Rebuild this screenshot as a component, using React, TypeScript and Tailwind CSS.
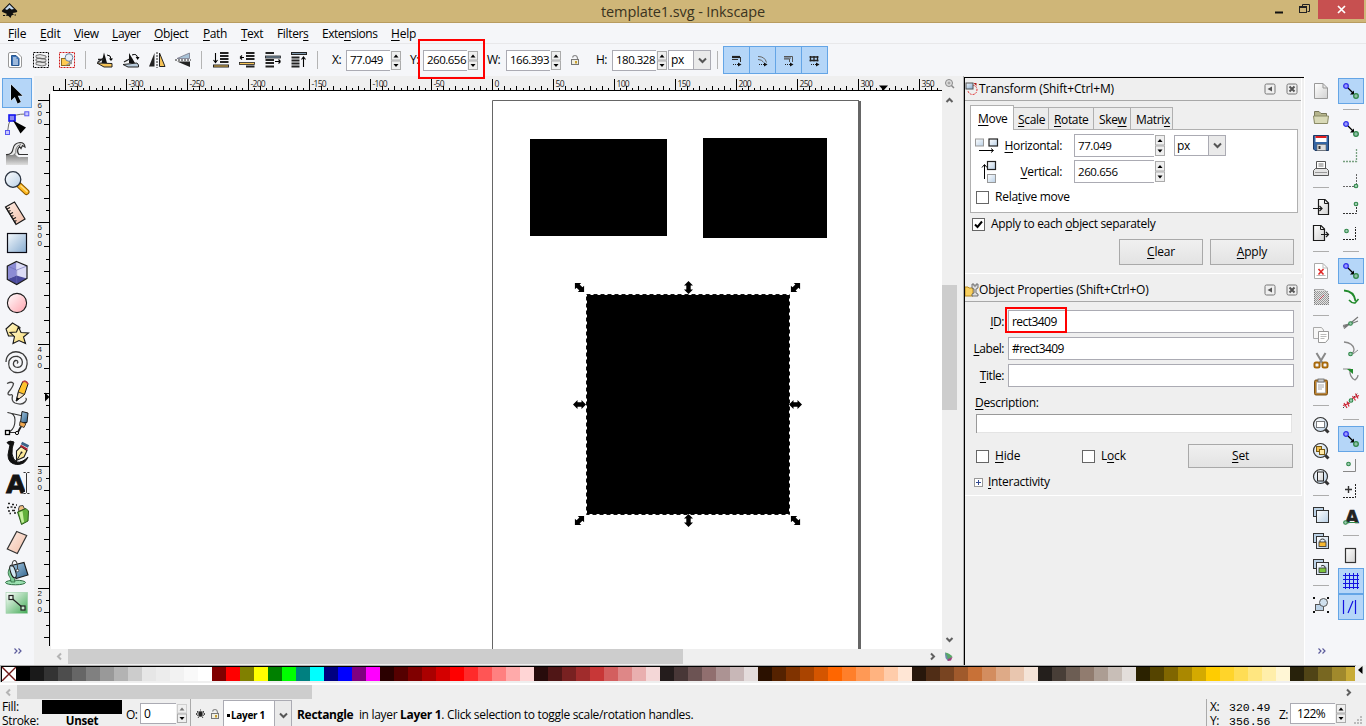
import React from "react";

type Kids = { children?: React.ReactNode };

/* ---------- drawing helpers ---------- */

function Pic({ w, h, children, className = "" }: Kids & { w: number; h: number; className?: string }) {
  return (
    <svg width={w} height={h} viewBox={`0 0 ${w} ${h}`} fill="none" className={`block shrink-0 ${className}`}>
      {children}
    </svg>
  );
}

function Gradients() {
  return (
    <svg width="0" height="0" className="absolute">
      <defs>
        <linearGradient id="blue" x1="0" y1="0" x2="1" y2="1">
          <stop offset="0" stopColor="#f4f9fd" />
          <stop offset="1" stopColor="#86abd0" />
        </linearGradient>
        <linearGradient id="steel" x1="0" y1="0" x2="1" y2="1">
          <stop offset="0" stopColor="#a8cbe4" />
          <stop offset="1" stopColor="#2f628c" />
        </linearGradient>
        <linearGradient id="pale" x1="0" y1="0" x2="1" y2="1">
          <stop offset="0" stopColor="#ffffff" />
          <stop offset="1" stopColor="#b9d0e6" />
        </linearGradient>
        <linearGradient id="pink" x1="0" y1="0" x2="1" y2="1">
          <stop offset="0" stopColor="#ffffff" />
          <stop offset="1" stopColor="#ffa3ad" />
        </linearGradient>
        <linearGradient id="peach" x1="0" y1="0" x2="1" y2="1">
          <stop offset="0" stopColor="#fdeee6" />
          <stop offset="1" stopColor="#f2bda6" />
        </linearGradient>
        <linearGradient id="gold" x1="0" y1="0" x2="1" y2="1">
          <stop offset="0" stopColor="#fffbd8" />
          <stop offset="1" stopColor="#f8d868" />
        </linearGradient>
        <linearGradient id="green" x1="0" y1="0" x2="1" y2="1">
          <stop offset="0" stopColor="#ffffff" />
          <stop offset="1" stopColor="#43ab57" />
        </linearGradient>
        <linearGradient id="grayv" x1="0" y1="0" x2="0" y2="1">
          <stop offset="0" stopColor="#6d6d6d" />
          <stop offset="1" stopColor="#dedede" />
        </linearGradient>
        <linearGradient id="paper" x1="0" y1="0" x2="1" y2="1">
          <stop offset="0" stopColor="#ffffff" />
          <stop offset="1" stopColor="#d2d2d2" />
        </linearGradient>
      </defs>
    </svg>
  );
}

/* ---------- toolbox ---------- */

const K = "#1a1a1a";

const tools: React.ReactNode[] = [
  <path d="M9 6.5V22.5L12.8 19L15.6 25.5L18.8 24L15.8 17.7H20.5Z" fill="#000" stroke="#e8f2fb" strokeWidth="1" paintOrder="stroke" />,
  <>
    <path d="M24 6Q12 6 9.5 10Q6 15 5.5 24" stroke="#707070" />
    <rect x="22.8" y="3.8" width="4" height="4" fill="#c8c8ff" stroke="#5858f0" />
    <rect x="3.5" y="22.5" width="4" height="4" fill="#c8c8ff" stroke="#5858f0" />
    <rect x="7" y="7" width="6" height="6" fill="#8a8af0" stroke="#1414f0" strokeWidth="1.6" />
    <path d="M11 12.5L24 19.5L18.5 25.5Z" fill="#000" />
  </>,
  <>
    <path d="M4 17H10Q12 17 13 14Q14 20 19 19H26V27H4Z" fill="url(#grayv)" />
    <path d="M4 16.5Q10 17 11 11Q12 5 18 4.500Q22.500 4.500 23 9L20.500 7.500L19 10.500L17.500 8.500Q14 13 17 16.500H26" fill="#e8e8e8" stroke="#333" strokeWidth="1.2" />
    <path d="M12 17Q14.500 15 14 11Q15 7 19 6.500" stroke="#777" />
  </>,
  <>
    <path d="M17 17L24.5 24" stroke="#8c5a00" strokeWidth="6" strokeLinecap="round" />
    <path d="M18 18L24.5 24" stroke="#ffb81e" strokeWidth="4" strokeLinecap="round" />
    <path d="M19 18L25 23.500" stroke="#ffe08a" strokeWidth="1.500" strokeLinecap="round" />
    <circle cx="11" cy="11.5" r="7.8" fill="url(#pale)" stroke="#2a3340" strokeWidth="1.3" />
  </>,
  <>
    <path d="M3.5 9L12.5 4L23 21L14 26.5Z" fill="url(#peach)" stroke={K} strokeWidth="1.2" />
    <path d="M4 9.5L14 26M5 11l3-1.5M6.5 13.5l2-1M8 16l3-1.5M9.5 18.5l2-1M11 21l3-1.5M12.5 23.5l2-1" stroke={K} strokeWidth="1.1" />
  </>,
  <rect x="5.5" y="5.5" width="19" height="19" fill="url(#blue)" stroke="#0b0b14" strokeWidth="1.2" />,
  <>
    <path d="M5.3 8L14.5 3.8V17.5L5.3 21.3Z" fill="#8c8cd4" />
    <path d="M14.5 3.8L25 8V20.5L14.5 17.5Z" fill="#dcdcf6" />
    <path d="M14.5 17.5L25 20.5L14.7 26.3L5.3 21.3Z" fill="#4a4a9c" />
    <path d="M5.300 8L14.700 12V26.500M14.700 12L25 8" stroke="#6a6ab4" strokeWidth=".6" />
    <path d="M14.5 3.5L25 8V20.5L14.7 26.5L5.3 21.5V8Z" stroke={K} strokeWidth="1.2" />
  </>,
  <circle cx="15" cy="15" r="9.6" fill="url(#pink)" stroke={K} strokeWidth="1.1" />,
  <>
    <path d="M10.5 5L18 9.5L15.5 18H6.5L4 11Z" fill="url(#gold)" stroke={K} strokeWidth="1.1" />
    <path d="M16.5 9L19 14.5L26.5 15L21.5 19L23.5 25.5L17 22.5L11 25.5L12.5 18.7L8 14.5L14.5 14Z" fill="url(#gold)" stroke={K} strokeWidth="1.1" />
  </>,
  <path d="M15 15.500Q16.500 14.500 15.500 13Q13.500 11.500 11.800 14Q10.500 17.500 13.500 19Q18 20.500 20 16.500Q21.500 10.500 16 8.500Q9.500 7.500 7 13Q5.500 20.500 11.500 23.800Q19 26.500 24 20.500Q27.500 12 21 6Q13.500 1.500 7.500 6Q4 9 4 14" stroke="#3a3a3a" strokeWidth="1.300" />,
  <>
    <path d="M5 5.5Q10 3 11.5 5.5Q11 9 7 13.5Q4.5 17 8 17Q10.5 16 10.5 18Q9 23 13 25Q20 27.5 23 24Q25.5 21 23.5 20" stroke="#444" strokeWidth="1.3" />
    <path d="M14.2 23L16.5 13L20.5 4Q24 1.8 26 6L22.5 16.5Z" fill="#ffc42e" stroke={K} strokeWidth="1" />
    <path d="M14.2 23L16.5 14L22.5 16.5Z" fill="#f6e2c0" stroke={K} strokeWidth=".8" />
    <path d="M14.2 23L15 19.5L17.3 20.5Z" fill="#000" />
    <path d="M20.5 4Q24 1.8 26 6" stroke="#c04040" strokeWidth="1.6" />
  </>,
  <>
    <path d="M5.500 4.500Q13 5 13 12Q13 20 8 23.500M7.500 24.500H14M5.500 4.500L21 8" stroke="#333" strokeWidth="1.100" />
    <rect x="3.500" y="22.500" width="4" height="4" fill="#fff" stroke="#000" strokeWidth="1.300" />
    <circle cx="15" cy="25" r="1.600" fill="#fff" stroke="#000" />
    <path d="M20 3.500L26 5L25 14.500H18.500Z" fill="url(#steel)" stroke={K} />
    <path d="M18 13.500L24 15.500L22 19.500L17.500 17.500Z" fill="#f0a850" stroke={K} strokeWidth=".8" />
    <path d="M19 18.500L16 24" stroke={K} strokeWidth="1.800" />
  </>,
  <>
    <path d="M5 4.500Q8 2 12 4Q9.500 10 10 16Q11 22 15 24Q20 25 26 19Q23 27 14.500 26.500Q6 25.500 6 17Q7 11 8 7Q6.500 6.500 5 4.500Z" fill="#101010" stroke="#101010" />
    <path d="M14.500 22.500L14.500 13L19 8.500L25 12.500L22 19Z" fill="url(#gold)" stroke={K} strokeWidth="1.100" />
    <path d="M15 22L19 15" stroke={K} /><circle cx="19.500" cy="14.500" r="1" fill={K} />
    <path d="M18.500 7.500L25.500 11.500" stroke="#b02030" strokeWidth="2" />
    <path d="M19.500 5L26.500 8.500" stroke="#3c6488" strokeWidth="3" />
  </>,
  <>
    <text x="4" y="24.500" fontFamily="DejaVu Sans" fontWeight="700" fontSize="25.500" fill="#141414" stroke="#141414" strokeWidth=".9">A</text>
    <path d="M21.500 4.500h2l1 1l1-1h2M24.500 5.500V24.500M21.500 25.500h2l1-1l1 1h2" stroke="#f5f6f9" strokeWidth="3" />
    <path d="M21.500 4.500h2l1 1l1-1h2M24.500 5.500V24.500M21.500 25.500h2l1-1l1 1h2" stroke="#333" strokeWidth="1" />
  </>,
  <>
    <path d="M6 5.500h2M10 6.500h2M5 9.500h2M8.500 9h2M12 9.500h2M6 13h2M10 12.500h3M7.500 15.500h1.500M12 15h2M14 7h1" stroke="#222" strokeWidth="1.500" />
    <path d="M16.500 11L17.500 8L21 7.500L22.500 11L17 13.500Z" fill="#f0c080" stroke="#444" />
    <path d="M15.500 14L24 10.500L26.500 13L26 23L19.500 26.500L17.500 20Z" fill="#62b13c" stroke="#2a5a18" />
    <path d="M17 14.500L20.500 13L22 24L19.800 25Z" fill="#c8f0a0" />
  </>,
  <path d="M14.700 3.500L24.700 7.500L15.300 25.500L5.300 21Z" fill="url(#peach)" stroke="#333" strokeWidth="1.200" />,
  <>
    <ellipse cx="13.500" cy="24.500" rx="10" ry="2.300" fill="#9ae0b0" stroke="#2c6a40" />
    <path d="M10 7Q5 12 6.500 17Q9 20 9 24H13Q13 20 10 17Z" fill="#7ccc94" stroke="#2c6a40" strokeWidth=".8" />
    <path d="M9.500 7.500L22 4.500L26 17L14 20.500Z" fill="url(#steel)" stroke={K} strokeWidth="1.100" />
    <ellipse cx="11" cy="13.500" rx="2.500" ry="6.500" transform="rotate(-18 11 13.500)" fill="#cfe6f2" stroke={K} />
    <path d="M10 9Q10 2 13 2.500Q16 4 15.500 12" stroke="#444" strokeWidth="1.100" />
    <circle cx="15.500" cy="12.500" r="1.300" fill="#fff" stroke="#333" strokeWidth=".8" />
  </>,
  <>
    <rect x="4" y="4.300" width="21.600" height="21" fill="url(#green)" stroke="#9ed0aa" strokeWidth=".6" />
    <path d="M9 9.500L21 20" stroke="#222" strokeWidth="1.200" />
    <rect x="7" y="7.500" width="4" height="4" fill="#e8f5ea" stroke="#222" strokeWidth="1.200" />
    <rect x="19" y="18" width="4" height="4" fill="#c8e8d0" stroke="#222" strokeWidth="1.200" />
  </>,
];

function Toolbox() {
  return (
    <div className="flex w-[34px] shrink-0 flex-col items-center bg-[#f5f6f9] pt-[2px]">
      {tools.map((t, i) => (
        <div
          key={i}
          className={
            i === 0
              ? "flex h-[30px] w-[30px] items-center justify-center bg-[#b5d6f8] shadow-[inset_0_0_0_1px_#64a5e6]"
              : "flex h-[30px] w-[30px] items-center justify-center"
          }
        >
          <Pic w={30} h={30}>{t}</Pic>
        </div>
      ))}
      <Chevrons />
    </div>
  );
}

function Chevrons() {
  return (
    <Pic w={10} h={8} className="mt-auto mb-[10px] ml-[1px]">
      <path d="M1.500 1.500L4 4L1.500 6.500M5.500 1.500L8 4L5.500 6.500" stroke="#5c5c9c" strokeWidth="1.200" />
    </Pic>
  );
}

/* ---------- form pieces ---------- */

function Spinner({ h = 19, dim = false }: { h?: number; dim?: boolean }) {
  const half = (h - 1) / 2;
  return (
    <Pic w={10} h={h}>
      <rect x=".5" y=".5" width="9" height={half - 0.5} fill="#efefef" stroke={dim ? "#cfcfcf" : "#ababab"} />
      <rect x=".5" y={half + 1} width="9" height={half - 0.5} fill="#efefef" stroke="#ababab" />
      <path d={`M2.500 ${half / 2 + 2}L5 ${half / 2 - 1}L7.500 ${half / 2 + 2}Z`} fill={dim ? "#777" : "#000"} />
      <path d={`M2.500 ${half * 1.5 - 0.5}L5 ${half * 1.5 + 2.5}L7.500 ${half * 1.5 - 0.5}Z`} fill="#000" />
    </Pic>
  );
}

function Caret() {
  return (
    <Pic w={9} h={7}>
      <path d="M1 1.500L4.500 5L8 1.500" stroke="#555" strokeWidth="2" />
    </Pic>
  );
}

function BarField({ value }: { value: string }) {
  return (
    <div className="flex shrink-0 items-center">
      <div className="mr-px flex h-[21px] w-[44px] items-center border border-r-0 border-[#ababb3] bg-white pl-[3px] text-[11.5px] tracking-[-0.5px] whitespace-nowrap">
        <span>{value}</span>
      </div>
      <Spinner />
    </div>
  );
}

function Sep({ className }: { className: string }) {
  return <div className={`h-[18px] w-px shrink-0 bg-[#b4b4b4] ${className}`} />;
}

function Lock() {
  return (
    <Pic w={10} h={12}>
      <path d="M2.500 3.500Q3 1.500 5 1.500Q7 1.500 7.500 4V6" stroke="#888" strokeWidth="1.200" />
      <rect x="1.500" y="5.500" width="7" height="5" fill="#f0eee0" stroke="#777" />
      <path d="M6 7v2.500" stroke="#c8a030" strokeWidth="2" />
    </Pic>
  );
}

/* ---------- option bar ---------- */

const barIcons: React.ReactNode[] = [
  <>
    <path d="M3.500 4Q3.500 2.500 5 2.500H12L16.500 7V16Q16.500 17.500 15 17.500H5Q3.500 17.500 3.500 16Z" fill="#fff" stroke="#999" />
    <path d="M6.500 5.500H11L14 8.500V15.500H6.500Z" fill="#3a72b8" stroke="#28568f" />
    <path d="M8 8h3.500M8 10h5M8 12h5M8 14h5" stroke="#fff" strokeWidth="1" />
  </>,
  <>
    <rect x="2.500" y="2.500" width="15" height="15" stroke="#000" strokeDasharray="2 1" />
    <path d="M5 12.500l4-1 6 1.500v2l-4 1-6-1.500ZM5 9l4-1 6 1.500v2l-4 1-6-1.500ZM5 5.500l4-1 6 1.500v2l-4 1-6-1.500Z" fill="#e4e4e4" stroke="#555" strokeWidth=".8" />
  </>,
  <>
    <rect x="2.500" y="2.500" width="15" height="15" stroke="#d01818" strokeDasharray="2 1" />
    <rect x="4.500" y="8.500" width="8" height="7" fill="#ffcb50" stroke="#8a6a20" />
    <circle cx="12" cy="7.500" r="3.800" fill="#e8eff6" stroke="#6b83a0" />
    <path d="M8 15.500l7-5v3.500Z" fill="#999" />
  </>,
  <>
    <path d="M9 2.500L12 13H6.500Z" fill="#111" />
    <path d="M2.500 12.500L8 8.500" stroke="#222" strokeWidth="1.200" />
    <path d="M2 13L17 13.500V17H9Z" fill="#f5c255" stroke="#222" />
    <path d="M12 5Q16 5 16 9" stroke="#000" /><path d="M14 8.500h4L16 11Z" fill="#000" />
    <path d="M3 9.500h6" stroke="#222" strokeWidth="1.500" />
  </>,
  <>
    <path d="M8 3L14 13H8Z" fill="#111" />
    <path d="M3 12L8.500 9" stroke="#222" strokeWidth="1.200" />
    <path d="M2 14.500L16 13L17.500 15V17H7Z" fill="#b9ccdc" stroke="#222" />
    <path d="M11 5Q16 3 16.500 8" stroke="#000" /><path d="M14.700 7h3.800L16.700 10Z" fill="#000" />
  </>,
  <>
    <path d="M7.500 3V16.500H2Z" fill="#222" />
    <path d="M12.500 3V16.500H18Z" fill="#f5c255" stroke="#222" />
    <path d="M10 2V18" stroke="#222" strokeDasharray="2 1" />
  </>,
  <>
    <path d="M4 8.500H16.500V3Z" fill="#a9c3d8" stroke="#778" strokeWidth=".8" />
    <path d="M4 11.500H17V17Z" fill="#222" />
    <path d="M2 10H18" stroke="#222" strokeDasharray="2 1" />
  </>,
  <>
    <path d="M4.500 3V12M2.500 10L4.500 12.500L6.500 10" stroke="#000" strokeWidth="1.100" />
    <path d="M9 3h8.500M9 6h8.500M9 9h8.500M9 12h8.500" stroke="#222" strokeWidth="1.800" />
    <rect x="2.500" y="15" width="15" height="2" fill="#f5c255" stroke="#222" />
  </>,
  <>
    <path d="M3 7.500H7M3 7.500l2-2M3 7.500l2 2" stroke="#000" strokeWidth="1.100" />
    <path d="M9 3h8.500M9 6h8.500M9 9h8.500M9 16.500h8.500" stroke="#222" strokeWidth="1.800" />
    <rect x="2.500" y="12.500" width="15" height="2" fill="#f5c255" stroke="#222" strokeWidth=".8" />
  </>,
  <>
    <path d="M2.500 3h8.500M2.500 10h8.500M2.500 13h8.500M2.500 16.500h8.500" stroke="#222" strokeWidth="1.800" />
    <rect x="2.500" y="6" width="15" height="2" fill="#7d97ac" stroke="#222" strokeWidth=".8" />
    <path d="M12 11.500h5.500M17.500 11.500l-2-2M17.500 11.500l-2 2" stroke="#000" strokeWidth="1.100" />
  </>,
  <>
    <rect x="2.500" y="2.500" width="15" height="2" fill="#7d97ac" stroke="#222" />
    <path d="M2.500 7.500h8M2.500 10.500h8M2.500 13.500h8M2.500 16.500h8" stroke="#222" strokeWidth="1.800" />
    <path d="M14.500 17V7.500M12.500 9.500L14.500 7L16.500 9.500" stroke="#000" strokeWidth="1.100" />
  </>,
];

const toggleIcons: React.ReactNode[] = [
  <><path d="M3 4H11" stroke="#222" strokeWidth="2.200" /><path d="M11.500 4V9M3 6.500h6" stroke="#333" /></>,
  <path d="M3 3.500Q10 3.500 11.500 9.500M3 6.500Q7.500 6.500 8.500 9.500" stroke="#666" />,
  <path d="M3 3.500H11.500V9M3 6H8.500V9M3 5h7" stroke="#555" />,
  <path d="M2.500 4H11.500M2.500 7.500H11.500M3.500 3v5.500M7 3v5.500M10.500 3v5.500" stroke="#222" strokeWidth="1.300" />,
];

function BarIcon({ i }: { i: number }) {
  return (
    <div className="flex w-[26px] shrink-0 justify-center">
      <Pic w={20} h={20}>{barIcons[i]}</Pic>
    </div>
  );
}

function OptionBar() {
  return (
    <div className="flex h-[33px] items-center border-t border-[#e8e8ea] bg-[#f5f6f9] pl-[2px]">
      {[0, 1, 2].map((i) => <BarIcon key={i} i={i} />)}
      <Sep className="mr-[6px] ml-[5px]" />
      {[3, 4, 5, 6].map((i) => <BarIcon key={i} i={i} />)}
      <Sep className="mr-[6px] ml-[5px]" />
      {[7, 8, 9, 10].map((i) => <BarIcon key={i} i={i} />)}
      <Sep className="ml-[5px]" />
      <span className="ml-[14px] w-[14px] shrink-0 tracking-[-0.5px]">X:</span>
      <BarField value="77.049" />
      <span className="ml-[9px] w-[13px] shrink-0 tracking-[-0.5px]">Y:</span>
      <BarField value="260.656" />
      <span className="ml-[9px] w-[19px] shrink-0 tracking-[-0.5px]">W:</span>
      <BarField value="166.393" />
      <div className="ml-[9px]"><Lock /></div>
      <span className="ml-[16px] w-[16px] shrink-0 tracking-[-0.5px]">H:</span>
      <BarField value="180.328" />
      <div className="ml-px flex h-[20px] w-[43px] shrink-0 border border-[#ababb3] bg-white">
        <span className="flex flex-1 items-center pl-[2px] tracking-[-0.4px]">px</span>
        <span className="flex w-[17px] items-center justify-center border-l border-[#ababb3] bg-[#eaeaea]"><Caret /></span>
      </div>
      <Sep className="ml-[6px]" />
      <div className="ml-[5px] flex">
        {toggleIcons.map((t, i) => (
          <div key={i} className="-mr-px flex h-[28px] w-[27px] shrink-0 items-center justify-center border border-[#64a5e6] bg-[#b5d6f8]">
            <Pic w={15} h={15}>
              {t}
              <path d="M4 11.500H9" stroke="#222" strokeDasharray="1 1" />
              <path d="M9 9.500L12.500 11.500L9 13.500Z" fill="#111" />
            </Pic>
          </div>
        ))}
      </div>
    </div>
  );
}

/* ---------- title and menu ---------- */

function TitleBar() {
  return (
    <div className="flex h-[23px] items-start border-b border-[#b89c60] bg-[#cfb678]">
      <Pic w={17} h={17} className="mt-[2px] ml-[1px]">
        <path d="M8.500 1L16 8.500Q17 10 14.500 10.500L11.500 11L13 12.500L10.500 13.500L9.500 16L7.500 14L4.500 13.500L6 12L1.500 10Q0 9 1.500 8Z" fill="#111" />
        <path d="M8.500 2.500L13 7L10.500 7.500L8.500 6L6 8L4 7Z" fill="#c5d8ec" />
        <path d="M2 13.500h2M13.500 13h1.500" stroke="#111" />
      </Pic>
      <div className="mt-[2px] ml-[583px] w-[180px] text-[14.5px] leading-[20px] tracking-[-0.1px] whitespace-nowrap text-[#3a3320]">template1.svg - Inkscape</div>
      <Pic w={50} h={20} className="mr-px ml-auto">
        <path d="M8 12.500H16" stroke="#111" strokeWidth="2" />
        <path d="M35.500 6V4.500H42.500V11.500H40.500" stroke="#222" />
        <rect x="32.500" y="6.500" width="7" height="6" stroke="#222" strokeWidth="1" />
        <path d="M32 7H40" stroke="#222" strokeWidth="2" />
      </Pic>
      <div className="mr-[2px] flex h-[19px] w-[46px] items-center justify-center bg-[#c75050]">
        <Pic w={9} h={9}><path d="M1 1L8 8M8 1L1 8" stroke="#fff" strokeWidth="1.700" /></Pic>
      </div>
    </div>
  );
}

const U = ({ children }: Kids) => <span className="underline decoration-1 underline-offset-2">{children}</span>;

function MenuBar() {
  return (
    <div className="flex h-[20px] items-center bg-[#f5f6f9] pt-[2px] pl-[8px] text-[12px] leading-[18px] tracking-[-0.2px] whitespace-nowrap">
      <span className="w-[32px]"><U>F</U>ile</span>
      <span className="w-[34px]"><U>E</U>dit</span>
      <span className="w-[38px] tracking-[-0.4px]"><U>V</U>iew</span>
      <span className="w-[42px] tracking-[-0.4px]"><U>L</U>ayer</span>
      <span className="w-[49px] tracking-[-0.35px]"><U>O</U>bject</span>
      <span className="w-[38px] tracking-[-0.4px]"><U>P</U>ath</span>
      <span className="w-[36px] tracking-[-0.5px]"><U>T</U>ext</span>
      <span className="w-[45px] tracking-[-0.35px]">Filter<U>s</U></span>
      <span className="w-[69px] tracking-[-0.5px]">Exte<U>n</U>sions</span>
      <span><U>H</U>elp</span>
    </div>
  );
}

/* ---------- rulers and drawing ---------- */

function TopRuler() {
  const ticks: React.ReactNode[] = [];
  for (let n = -72; n <= 73; n++) {
    const x = Math.round(441 + n * 6.1) + 0.5;
    if (x < 2 || x > 890) continue;
    const major = n % 10 === 0;
    ticks.push(<path key={n} d={`M${x} 15V${major ? 3 : n % 2 === 0 ? 10 : 12}`} stroke="#000" />);
    if (major) ticks.push(<text key={`t${n}`} x={x + 2} y="10.800" fontSize="8.500" letterSpacing="-0.7" fill="#222">{n * 5}</text>);
  }
  return (
    <Pic w={891} h={15}>
      <path d="M2 14.500H891" stroke="#000" />
      {ticks}
      <path d="M828 9.500h9l-4.500 5Z" fill="#000" />
    </Pic>
  );
}

function SideRuler() {
  const ticks: React.ReactNode[] = [];
  for (let n = 0; n <= 44; n++) {
    const y = Math.round(9 + n * 12.2) + 0.5;
    if (y > 556) continue;
    const major = n % 10 === 0;
    ticks.push(<path key={n} d={`M16 ${y}H${major ? 4 : n % 2 === 0 ? 10 : 12}`} stroke="#000" />);
    if (major)
      String(600 - n * 10).split("").forEach((c, k) =>
        ticks.push(<text key={`${n}-${k}`} x="3.500" y={y + 7.5 + k * 8} fontSize="8" fontFamily="Liberation Sans" fill="#222">{c}</text>)
      );
  }
  return (
    <Pic w={17} h={558}>
      <path d="M15.500 3V555" stroke="#000" />
      {ticks}
      <path d="M11 301.500v9l4.500-4.500Z" fill="#000" />
    </Pic>
  );
}

function Handle({ x, y, r }: { x: number; y: number; r: number }) {
  return (
    <path
      transform={`translate(${x} ${y}) rotate(${r})`}
      d="M-6.500 0L-2 -4.500V-2.200H2V-4.500L6.500 0L2 4.500V2.200H-2V4.500Z"
      fill="#000"
    />
  );
}

function Drawing() {
  return (
    <Pic w={891} h={558} className="bg-white">
      <path d="M441.500 558V9.500H808" stroke="#666" />
      <path d="M808.500 10V558" stroke="#666" strokeWidth="3" />
      <rect x="479" y="48" width="137" height="97" fill="#000" />
      <rect x="652" y="47" width="124" height="100" fill="#000" />
      <rect x="536" y="204" width="202" height="219" fill="#000" />
      <rect x="535.500" y="203.500" width="203" height="220" stroke="#fff" />
      <rect x="535.500" y="203.500" width="203" height="220" stroke="#111" strokeDasharray="4 3" />
      <Handle x={528.5} y={196.5} r={45} />
      <Handle x={744.5} y={196.5} r={-45} />
      <Handle x={528.5} y={429.5} r={-45} />
      <Handle x={744.5} y={429.5} r={45} />
      <Handle x={637.5} y={196.5} r={90} />
      <Handle x={637.5} y={429.5} r={90} />
      <Handle x={528.5} y={313.5} r={0} />
      <Handle x={744.5} y={313.5} r={0} />
    </Pic>
  );
}

function Chevron({ dir, color = "#606060" }: { dir: "l" | "r" | "u" | "d"; color?: string }) {
  const d = {
    l: "M6 1.500L3 4.500L6 7.500",
    r: "M3 1.500L6 4.500L3 7.500",
    u: "M1.500 6L4.500 3L7.500 6",
    d: "M1.500 3L4.500 6L7.500 3",
  }[dir];
  return <Pic w={9} h={9}><path d={d} stroke={color} strokeWidth="2" /></Pic>;
}

function CanvasArea() {
  return (
    <div className="flex w-[929px] shrink-0 flex-col bg-[#efefef]">
      <div className="flex h-[15px]">
        <div className="w-[17px]" />
        <TopRuler />
        <Pic w={15} h={15}>
          <circle cx="7" cy="7" r="3.500" fill="#ddd" stroke="#888" /><path d="M9.500 9.500L12 12" stroke="#888" strokeWidth="1.500" /><path d="M5.500 7h3M7 5.500v3" stroke="#888" strokeWidth=".8" />
        </Pic>
      </div>
      <div className="flex h-[558px]">
        <SideRuler />
        <Drawing />
        <div className="flex w-[15px] flex-col items-center">
          <div className="mt-[5px]"><Chevron dir="u" /></div>
          <div className="mt-[180px] h-[125px] w-[15px] bg-[#cdcdcd]" />
          <div className="mt-auto mb-[5px]"><Chevron dir="d" /></div>
        </div>
      </div>
      <div className="flex h-[15px] items-center pl-[21px]">
        <Chevron dir="l" color="#b4b4b4" />
        <div className="ml-[4px] h-[15px] w-[615px] bg-[#cdcdcd]" />
        <div className="ml-auto"><Chevron dir="r" /></div>
        <Pic w={11} h={11} className="mr-[9px] ml-[6px]">
          <path d="M2 1.500Q7 2 9.500 6L5 9.500Q3 8 2 1.500Z" fill="#58a868" /><path d="M4 8.500L9.500 6L8 9.500L5 10Z" fill="#a04080" /><path d="M2 1.500L2.500 7L5 10L4 5Z" fill="#6c88b0" />
        </Pic>
      </div>
    </div>
  );
}

/* ---------- dock ---------- */

function PanelButtons() {
  return (
    <>
      <Pic w={12} h={12} className="ml-auto">
        <rect x="1" y="1" width="10" height="10" rx="1.500" stroke="#777" /><path d="M8 3.500V8.500L3.500 6Z" fill="#555" />
      </Pic>
      <Pic w={12} h={12} className="mr-[3px] ml-[10px]">
        <rect x="1" y="1" width="10" height="10" rx="1.500" stroke="#777" /><path d="M3.500 3.500L8.500 8.500M8.500 3.500L3.500 8.500" stroke="#555" strokeWidth="2" />
      </Pic>
    </>
  );
}

function Check({ on = false }: { on?: boolean }) {
  return (
    <Pic w={13} h={13}>
      <rect x=".5" y=".5" width="12" height="12" fill="#fff" stroke="#666" />
      {on && <path d="M3 6.500L5.500 9L10 3.500" stroke="#000" strokeWidth="2" />}
    </Pic>
  );
}

function Btn({ w, h = 26, children }: Kids & { w: string; h?: number }) {
  return (
    <div className={`flex ${h === 26 ? "h-[26px]" : "h-[24px]"} ${w} items-center justify-center border border-[#a9a9a9] bg-linear-to-b from-[#f0f0f0] to-[#e3e3e3] tracking-[-0.2px]`}>
      <span>{children}</span>
    </div>
  );
}

function DockField({ value }: { value: string }) {
  return (
    <div className="flex items-center">
      <div className="mr-px flex h-[23px] w-[80px] items-center border border-r-0 border-[#ababb3] bg-white pl-[3px] text-[11.5px] tracking-[-0.4px]">{value}</div>
      <Spinner h={21} />
    </div>
  );
}

function PropRow({ label, value, className }: { label: React.ReactNode; value: string; className: string }) {
  return (
    <div className={`flex h-[23px] items-center ${className}`}>
      <span className="w-[39px] text-right tracking-[-0.45px]">{label}</span>
      <div className="ml-[4px] flex h-[23px] w-[286px] items-center border border-[#ababb3] bg-white pl-[3px] tracking-[-0.55px]">{value}</div>
    </div>
  );
}

function Tab({ w, children }: Kids & { w: string }) {
  return (
    <div className={`-ml-px flex h-[22px] ${w} items-center overflow-hidden border border-b-0 border-[#b0b0b0] bg-[#ececec] pt-[2px] pl-[4px] tracking-[-0.35px]`}>
      <span>{children}</span>
    </div>
  );
}

function Dock() {
  return (
    <div className="flex w-[341px] shrink-0 flex-col border-l border-[#b0b0b0] bg-[#efefef] pt-px text-[12px] leading-[16px] whitespace-nowrap">
      <div className="flex flex-1 flex-col border-t border-l border-black">
        <div className="mr-[2px] h-[196px] border-r border-b border-white">
          <div className="flex h-[23px] items-center border-b border-[#a8a8a8]">
            <Pic w={14} h={14}>
              <path d="M7.500 3.500Q11 3 12 7Q12 12 8 12.500Q4 12.500 3 9" stroke="#e03030" strokeDasharray="2 1" />
              <rect x="1" y="1" width="7" height="6" fill="url(#blue)" stroke="#555" /><path d="M8.500 1h3v3Z" fill="#b01818" />
            </Pic>
            <span className="tracking-[-0.14px]">Transform (Shift+Ctrl+M)</span>
            <PanelButtons />
          </div>
          <div className="mt-[4px] ml-[5px] flex h-[24px] items-end">
            <div className="z-10 -mb-px flex h-[25px] w-[44px] items-center overflow-hidden border border-b-0 border-[#b0b0b0] bg-white pt-[2px] pl-[7px] tracking-[-0.3px]"><span><U>M</U>ove</span></div>
            <Tab w="w-[36px]"><U>S</U>cale</Tab>
            <Tab w="w-[46px]"><span className="pl-[1px]"><U>R</U>otate</span></Tab>
            <Tab w="w-[38px]"><span className="pl-[1px]">Ske<U>w</U></span></Tab>
            <Tab w="w-[43px]"><span className="pl-[1px]">Matri<U>x</U></span></Tab>
          </div>
          <div className="ml-[5px] h-[84px] w-[328px] border border-[#b0b0b0] bg-white">
            <div className="mt-[4px] flex h-[23px] items-center pl-[3px]">
              <Pic w={25} h={17}>
                <rect x="1.500" y="2" width="8" height="7" fill="url(#pale)" stroke="#999" /><rect x="15" y="2" width="8.500" height="7" fill="url(#pale)" stroke="#222" strokeWidth="1.200" /><path d="M5 13.500H19M17 11.500L19.500 13.500L17 15.500" stroke="#000" />
              </Pic>
              <span className="w-[63px] text-right tracking-[-0.35px]"><U>H</U>orizontal:</span>
              <div className="ml-[12px]"><DockField value="77.049" /></div>
              <div className="ml-[9px] flex h-[21px] w-[52px] border border-[#ababb3] bg-white">
                <span className="flex flex-1 items-center pl-[2px] tracking-[-0.4px]">px</span>
                <span className="flex w-[17px] items-center justify-center border-l border-[#ababb3] bg-[#eaeaea]"><Caret /></span>
              </div>
            </div>
            <div className="mt-[3px] flex h-[23px] items-center pl-[10px]">
              <Pic w={16} h={24}>
                <path d="M3.500 19V5M1 7.500L3.500 4.500L6 7.500" stroke="#000" /><rect x="6.500" y="1.500" width="8" height="8" fill="url(#pale)" stroke="#222" strokeWidth="1.200" /><rect x="6.500" y="14.500" width="8" height="8" fill="url(#pale)" stroke="#999" />
              </Pic>
              <span className="w-[65px] text-right tracking-[-0.35px]"><U>V</U>ertical:</span>
              <div className="ml-[12px]"><DockField value="260.656" /></div>
            </div>
            <div className="mt-[6px] flex h-[16px] items-center gap-[6px] pl-[5px]"><Check /><span className="tracking-[-0.25px]">Rela<U>t</U>ive move</span></div>
          </div>
          <div className="mt-[3px] flex h-[16px] items-center gap-[6px] pl-[7px]"><Check on /><span className="tracking-[-0.32px]">Apply to each <U>o</U>bject separately</span></div>
          <div className="mt-[7px] flex gap-[7px] pl-[154px]"><Btn w="w-[84px]"><U>C</U>lear</Btn><Btn w="w-[84px]"><U>A</U>pply</Btn></div>
        </div>
        <div className="mt-[4px] mr-[2px] h-[218px] border-r border-b border-white">
          <div className="flex h-[24px] items-center border-b border-[#a8a8a8]">
            <Pic w={14} h={14}>
              <path d="M0 4h3l1 1h4v8H0Z" fill="#f8d060" stroke="#b88a20" /><path d="M7 1h2v2h2V1h2v4l-2 1v4l2 1v2H7v-2l2-1V6L7 5Z" fill="#ddd" stroke="#555" strokeWidth=".8" />
            </Pic>
            <span className="tracking-[-0.2px]">Object Properties (Shift+Ctrl+O)</span>
            <PanelButtons />
          </div>
          <div className="relative">
            <PropRow label={<><U>I</U>D:</>} value="rect3409" className="mt-[8px]" />
            <div className="absolute top-[-3px] left-[40px] h-[26px] w-[62px] border-2 border-[#ff0000]" />
          </div>
          <PropRow label={<><U>L</U>abel:</>} value="#rect3409" className="mt-[4px]" />
          <PropRow label={<><U>T</U>itle:</>} value="" className="mt-[4px]" />
          <div className="mt-[8px] pl-[10px] tracking-[-0.3px]"><U>D</U>escription:</div>
          <div className="mt-[3px] ml-[11px] h-[19px] w-[316px] border-t border-l border-[#999] bg-white shadow-[inset_-1px_-1px_0_#e4e4e4]" />
          <div className="mt-[11px] flex h-[24px] items-center pl-[11px]">
            <Check /><span className="ml-[6px] w-[87px] tracking-[-0.2px]"><U>H</U>ide</span>
            <Check /><span className="ml-[6px] w-[87px] tracking-[-0.2px]">L<U>o</U>ck</span>
            <Btn w="w-[105px]" h={24}><U>S</U>et</Btn>
          </div>
          <div className="mt-[6px] flex h-[16px] items-center pl-[9px]">
            <Pic w={9} h={9}><rect x=".5" y=".5" width="8" height="8" fill="#fff" stroke="#999" /><path d="M2 4.500H7M4.500 2V7" stroke="#334a90" /></Pic>
            <span className="ml-[5px] tracking-[-0.3px]"><U>I</U>nteractivity</span>
          </div>
        </div>
      </div>
    </div>
  );
}

/* ---------- command and snap columns ---------- */

const page = "M3.500 2.500H12L16.500 7V17.500H3.500Z";
const lens = (
  <>
    <path d="M14 14L17.500 17.500" stroke="#333" strokeWidth="3" />
    <circle cx="9.500" cy="9.500" r="7" fill="url(#pale)" stroke="#333" strokeWidth="1.200" />
  </>
);
const stack = (
  <>
    <rect x="2.500" y="2.500" width="10" height="9" fill="#bcd2e6" stroke="#333" />
    <rect x="5.500" y="5.500" width="12" height="12" fill="url(#pale)" stroke="#333" />
  </>
);

const commands: (React.ReactNode | "-")[] = [
  <><path d="M3.500 2.500H12L16.500 7V17.500H3.500Z" fill="url(#paper)" stroke="#999" /><path d="M12 2.500V7H16.500" stroke="#999" /></>,
  <><path d="M3.500 16.500V4.500H8L10 6.500H15.500V9" fill="#b5b58d" stroke="#77775a" /><path d="M2.500 9H17.500L16.500 16.500H3.500Z" fill="#d9dab8" stroke="#8a8a66" /></>,
  <><path d="M2.500 2.500H17.500V17.500H4L2.500 16Z" fill="#3465a4" stroke="#1c3a66" /><rect x="4.500" y="3" width="11" height="6" fill="#fff" /><path d="M4.500 4H15.500" stroke="#e02020" strokeWidth="2" /><rect x="6" y="11.500" width="9" height="6" fill="#ddd" stroke="#666" strokeWidth=".6" /><path d="M8.500 13v3" stroke="#333" strokeWidth="2" /></>,
  <><path d="M5.500 10V2.500H14.500V10" fill="#fff" stroke="#555" /><path d="M7.500 5h5M7.500 7h5" stroke="#777" /><path d="M2.500 11.500L4.500 9.500H15.500L17.500 11.500V16.500H2.500Z" fill="#e4e4e4" stroke="#555" /><path d="M4 13.500H16" stroke="#999" /></>,
  "-",
  <><path d="M7.500 2.500H14L17.500 6V17.500H7.500Z" fill="url(#paper)" stroke={K} strokeWidth="1.200" /><path d="M13.500 2.500V6.500H17.500" stroke={K} /><path d="M2 11.500H11M8.500 9L11 11.500L8.500 14" stroke={K} strokeWidth="1.200" /></>,
  <><path d="M2.500 2.500H10L13.500 6V17.500H2.500Z" fill="url(#paper)" stroke={K} strokeWidth="1.200" /><path d="M9.500 2.500V6.500H13.500" stroke={K} /><path d="M10 11.500H18M15 9L17.500 11.500L15 14" stroke={K} strokeWidth="1.200" /></>,
  "-",
  <><path d={page} fill="#fff" stroke="#aaa" /><path d="M12 2.500V7H16.500M5.500 14.500h9" stroke="#bbb" /><path d="M7.500 8L12.500 13.500M12.500 8L7.500 13.500" stroke="#e02828" strokeWidth="1.600" /></>,
  <><path d="M3.500 2.500H13L17.500 7V17.500H3.500Z" fill="#e2e2e2" stroke="#666" strokeDasharray="1 1" />{[4, 5, 6, 7, 8, 9, 10, 11, 12, 13, 14, 15, 16].map((y) => <path key={y} d={`M${4 + (y % 2)} ${y + 0.5}H17`} stroke="#999" strokeDasharray="1 1" strokeWidth="1" />)}<path d="M8 13L13 8" stroke="#c04858" /></>,
  "-",
  <><path d="M2.500 2.500H10.500L12.500 5V13.500H2.500Z" fill="#f7f7f7" stroke="#aaa" /><path d="M7.500 6.500H17.500V14L14.500 17.500H7.500Z" fill="#fff" stroke="#999" /><path d="M9.500 9.500h6M9.500 11.500h6M9.500 13.500h4" stroke="#bbb" /></>,
  <><path d="M5.500 2L11.500 12M14.500 2L8.500 12" stroke="#888" strokeWidth="2" /><rect x="3.500" y="11.500" width="5" height="5" rx="1.500" stroke="#a8690a" strokeWidth="2" /><rect x="11.500" y="11.500" width="5" height="5" rx="1.500" stroke="#a8690a" strokeWidth="2" /></>,
  <><rect x="3.500" y="3" width="13" height="15" rx="1.500" fill="#c07f24" stroke="#74501a" /><rect x="5.500" y="5" width="9" height="11" fill="#fff" stroke="#999" strokeWidth=".7" /><rect x="7" y="2" width="6" height="3" fill="#ccc" stroke="#666" strokeWidth=".8" /><path d="M7 8h6M7 10h6M7 12h4" stroke="#aaa" /></>,
  "-",
  <>{lens}<rect x="5.500" y="6.500" width="8" height="6" fill="#fff" stroke="#000" strokeDasharray="1 1" /></>,
  <>{lens}<rect x="5.500" y="5.500" width="5" height="5" fill="#f0c050" stroke="#7a5a10" /><rect x="8.500" y="8.500" width="5" height="5" fill="#ffe9a8" stroke="#7a5a10" /></>,
  <>{lens}<rect x="6.500" y="5" width="6" height="9" fill="url(#paper)" stroke="#222" /></>,
  "-",
  stack,
  <>{stack}<path d="M9 11V9.500Q9.500 8 11.500 8Q13.500 8 14 9.500V11" stroke="#333" /><rect x="8" y="11" width="7" height="4.500" fill="#f8b830" stroke="#333" strokeWidth=".8" /></>,
  <>{stack}<path d="M10 9Q12 7.500 14 9.500V11" stroke="#333" /><rect x="8" y="11" width="7" height="4.500" fill="#7cc43c" stroke="#333" strokeWidth=".8" /></>,
  "-",
  <><path d="M2 2h2v2H2ZM16 2h2v2H16ZM2 16h2v2H2ZM16 16h2v2H16Z" fill="#111" /><rect x="4.500" y="9.500" width="8" height="6" fill="#bcd2e6" stroke="#555" /><circle cx="12.500" cy="7.500" r="4" fill="#cfe0ee" stroke="#555" /></>,
];

const nodeArrow = (
  <>
    <circle cx="5" cy="5" r="2.300" fill="#9a9aff" stroke="#3030e8" strokeWidth="1.300" />
    <path d="M7 7L12 12" stroke="#000" strokeWidth="1.200" /><path d="M13 9.500V13.500H9Z" fill="#000" />
    <circle cx="15" cy="15" r="2.300" fill="#8fc0a8" stroke="#2e8648" strokeWidth="1.300" />
  </>
);
const dot = (x: number, y: number) => <circle cx={x} cy={y} r="1.800" fill="#9ecdb2" stroke="#2e8648" strokeWidth="1.100" />;

const snaps: [React.ReactNode | "-", boolean?][] = [
  [nodeArrow, true],
  ["-"],
  [nodeArrow],
  [<path d="M2 16.500H15.500V3" stroke="#78a080" strokeDasharray="2 1" strokeWidth="1.300" />],
  [<><path d="M2 15.500H15.500V2" stroke="#666" strokeDasharray="2 1" />{dot(15, 15)}</>],
  [<><path d="M2 16.500H15.500V8" stroke="#333" strokeDasharray="2 1" />{dot(15, 7)}</>],
  [<><path d="M2 16.500H14.500V4" stroke="#222" strokeDasharray="2 1" />{dot(5.5, 8)}</>],
  ["-"],
  [nodeArrow, true],
  [<><path d="M3 3.500Q13 4 14.500 14" stroke="#218a2c" strokeWidth="1.800" /><path d="M8 13Q11 16.500 14 16L17.500 12" stroke="#218a2c" strokeWidth="1.600" /></>],
  [<><path d="M3 15.500L17 4M2 14L17 8M2 12.500L10 10.500" stroke="#777" strokeWidth="1.200" />{dot(9.5, 10.5)}</>],
  [<><path d="M3 3Q12 4 13 10Q13 14 10 14.500" stroke="#888" strokeWidth="1.300" /><path d="M12 15L17 11" stroke="#888" />{dot(9.5, 15)}</>],
  [<><path d="M2 4H9Q8 12 14 15Q17 13 17 10" stroke="#888" strokeWidth="1.200" /><path d="M6 4h6v5Z" fill="#218a2c" /></>],
  [<><path d="M2 17L17 2" stroke="#444" strokeDasharray="2 1" /><path d="M3 12L6 17M6 10.500L8 15.500M2 14.500L9 12M11.500 5L14.500 9.500M14.500 2.500L17 7.500M11 7.500L18 4.500" stroke="#d02838" strokeWidth="1.200" />{dot(10, 9.5)}</>],
  ["-"],
  [nodeArrow, true],
  [<><path d="M2 16.500H14.500V4" stroke="#888" />{dot(7.5, 9)}</>],
  [<><path d="M4 8.500h7M7.500 5v7" stroke="#333" strokeWidth="1.400" /><path d="M2 16.500H14.500V3" stroke="#222" strokeDasharray="2 1" /></>],
  [<><text x="4.500" y="15.500" fontFamily="DejaVu Sans" fontWeight="700" fontSize="17" fill="#222" stroke="#222" strokeWidth=".7">A</text><path d="M3 15.500H17" stroke="#2e8648" />{dot(4.5, 15.5)}</>],
  ["-"],
  [<rect x="4.500" y="3.500" width="10" height="14" fill="url(#paper)" stroke="#333" strokeWidth="1.200" />],
  [<path d="M4.500 2V18M8.500 2V18M12.500 2V18M16.500 2V18M2 4.500H18M2 8.500H18M2 12.500H18M2 16.500H18" stroke="#1414e0" />, true],
  [<path d="M2.500 3V17M14.500 3V17M7 16L12 4" stroke="#1414e0" strokeWidth="1.200" />, true],
];

function SideColumn({ items, className }: { items: [React.ReactNode | "-", boolean?][]; className: string }) {
  return (
    <div className={`flex shrink-0 flex-col items-center bg-[#f5f6f9] pt-[2px] ${className}`}>
      {items.map(([icon, on], i) =>
        icon === "-" ? (
          <div key={i} className="flex h-[12px] w-[16px] shrink-0 pt-[5px]"><div className="h-px w-full bg-[#adadad]" /></div>
        ) : (
          <div key={i} className={on ? "flex h-[26px] w-[26px] shrink-0 items-center justify-center border border-[#64a5e6] bg-[#b5d6f8]" : "flex h-[26px] w-[26px] shrink-0 items-center justify-center"}>
            <Pic w={20} h={20}>{icon}</Pic>
          </div>
        )
      )}
    </div>
  );
}

/* ---------- palette and status ---------- */

const palette =
  "000000 1a1a1a 333333 4d4d4d 666666 808080 999999 b3b3b3 cccccc e6e6e6 ececec f2f2f2 f9f9f9 ffffff 800000 ff0000 808000 ffff00 008000 00ff00 008080 00ffff 000080 0000ff 800080 ff00ff 2b0000 550000 800000 aa0000 d40000 ff0000 ff2a2a ff5555 ff8080 ffaaaa ffd5d5 280b0b 501616 782121 a02c2c c83737 d35f5f de8787 e9afaf f4d7d7 241c1c 483737 6c5353 916f6f ac9393 c8b7b7 e3dbdb 2b1100 552200 803300 aa4400 d45500 ff6600 ff7f2a ff9955 ffb380 ffccaa ffe6d5 28170b 502d16 784421 a05a2c c87137 d38d5f deaa87 e9c6af f4e3d7 241f1c 483e37 6c5d53 917c6f ac9d93 c8beb7 e3dedb 2b2200 554400 806600 aa8800 d4aa00 ffcc00 ffd42a ffdd55 ffe680 ffeeaa fff6d5 28220b 504416 786721 a0892c c8ab37".split(" ");

function Palette() {
  return (
    <div className="flex h-[18px] items-start">
      <div className="flex h-[17px] w-[1356px] overflow-hidden border-t border-l border-t-[#b0b0b0] border-l-[#b0b0b0]">
        <div className="flex h-[17px] w-[1354px] overflow-hidden border-t border-l border-black">
          <Pic w={14} h={14}>
            <rect width="14" height="14" fill="#fff" /><path d="M0 0L14 14M14 0L0 14" stroke="#701818" strokeWidth="1.400" />
          </Pic>
          {palette.map((c, i) => (
            <div key={i} className="h-[14px] w-[14px] shrink-0" style={{ backgroundColor: `#${c}` }} />
          ))}
        </div>
      </div>
      <Pic w={5} h={8} className="mt-px ml-[2px]"><path d="M4.500 0V8L0 4Z" fill="#000" /></Pic>
    </div>
  );
}

function StatusBar() {
  return (
    <div className="flex h-[27px] overflow-hidden text-[12px] whitespace-nowrap">
      <div className="ml-[2px] w-[40px] pt-px leading-[14px] tracking-[-0.35px]">
        <div className="h-[14px]">Fill:</div>
        <div className="h-[14px]">Stroke:</div>
      </div>
      <div className="w-[80px] pt-px leading-[14px]">
        <div className="h-[14px] bg-black" />
        <div className="text-center text-[11.5px] font-bold tracking-[-0.3px]">Unset</div>
      </div>
      <span className="ml-[4px] w-[14px] leading-[31px] tracking-[-0.5px]">O:</span>
      <div className="mt-[4px] mr-px flex h-[21px] w-[36px] items-center border border-r-0 border-[#ababb3] bg-white pt-px pl-[3px]">0</div>
      <div className="mt-[5px]"><Spinner dim /></div>
      <div className="ml-[3px] w-px bg-[#aaa]" />
      <Pic w={11} h={10} className="mt-[10px] ml-[4px]">
        <path d="M1 5Q5.500 0 10 5Q5.500 10 1 5Z" fill="#ddd" stroke="#444" /><circle cx="5.500" cy="5" r="2.200" fill="#222" /><path d="M2 2l1 1M5.500 0.500v1M9 2l-1 1M3 9l.7-1M8 9l-.7-1" stroke="#444" />
      </Pic>
      <div className="mt-[9px] ml-[4px]"><Lock /></div>
      <div className="mt-px ml-[3px] flex h-[30px] w-[69px] border border-[#ababb3] bg-white">
        <span className="flex flex-1 items-center pl-[3px] text-[10px] leading-[20px] font-bold tracking-[-0.3px]">
          <span className="mr-[1px] h-[3px] w-[3px] bg-black" />
          <span>Layer 1</span>
        </span>
        <span className="flex w-[17px] items-center justify-center border-l border-[#ababb3] bg-[#eaeaea]"><Caret /></span>
      </div>
      <div className="ml-[5px] leading-[31px] tracking-[-0.31px] whitespace-pre"><b>Rectangle</b>{"  in layer "}<b>Layer 1</b>. Click selection to toggle scale/rotation handles.</div>
      <div className="mr-[3px] ml-auto w-px shrink-0 bg-[#aaa]" />
      <div className="w-[19px] shrink-0 pt-px leading-[14px] tracking-[-0.5px]"><div>X:</div><div>Y:</div></div>
      <div className="w-[42px] shrink-0 pt-[2px] font-['Liberation_Mono'] text-[11.5px] leading-[14px]"><div>320.49</div><div>356.56</div></div>
      <span className="ml-[8px] w-[11px] shrink-0 leading-[31px] tracking-[-0.5px]">Z:</span>
      <div className="mt-[4px] mr-px flex h-[21px] w-[45px] shrink-0 items-center border border-r-0 border-[#ababb3] bg-white pt-px pl-[6px] tracking-[-0.6px]">122%</div>
      <div className="mt-[5px]"><Spinner /></div>
      <Pic w={9} h={9} className="mt-[17px] mr-[3px] ml-[8px]">
        <path d="M6 0h2v2H6ZM3 3h2v2H3ZM6 3h2v2H6ZM0 6h2v2H0ZM3 6h2v2H3ZM6 6h2v2H6Z" fill="#bbb" />
      </Pic>
    </div>
  );
}

export default function App() {
  return (
    <div className="relative flex h-[726px] w-[1366px] flex-col overflow-hidden bg-[#efefef] font-['Open_Sans','Noto_Sans',sans-serif] text-[12px] text-black">
      <Gradients />
      <TitleBar />
      <MenuBar />
      <OptionBar />
      <div className="flex h-[589px]">
        <Toolbox />
        <CanvasArea />
        <Dock />
        <div className="flex w-[62px] shrink-0 flex-col border-l border-white bg-[#f5f6f9]">
          <div className="flex">
            <SideColumn items={commands.map((c) => [c])} className="w-[31px]" />
            <SideColumn items={snaps} className="w-[30px]" />
          </div>
          <div className="mt-auto ml-[11px]"><Chevrons /></div>
        </div>
      </div>
      <Palette />
      <div className="h-[2px] border-t border-b border-white" />
      <div className="flex h-[14px] items-center pl-[4px]">
        <Chevron dir="l" color="#b4b4b4" />
        <div className="ml-[4px] h-[14px] w-[295px] bg-[#cdcdcd]" />
        <div className="mr-[13px] ml-auto"><Chevron dir="r" /></div>
      </div>
      <StatusBar />
      <div className="absolute top-[39px] left-[418px] h-[40px] w-[67px] border-2 border-[#ff0000]" />
    </div>
  );
}
